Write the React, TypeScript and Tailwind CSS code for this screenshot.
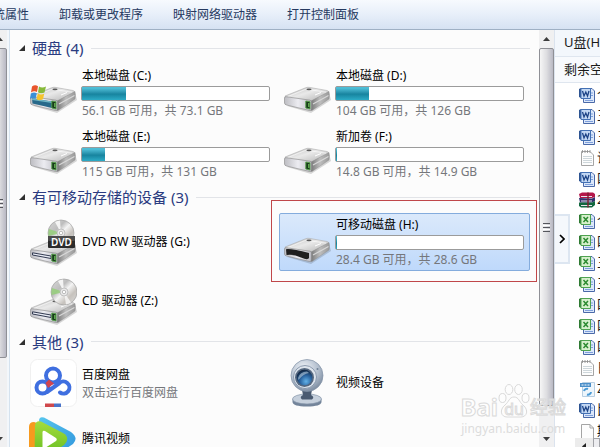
import type { ReactNode } from "react";
import clsx from "clsx";

type FileKind = "word" | "excel" | "text" | "archive" | "library" | "blank";

interface DriveInfo {
  name: string;
  detail?: string;
  used?: number;
  icon: ReactNode;
  selected?: boolean;
}

const files: { kind: FileKind; name: string }[] = [
  { kind: "word", name: "个" },
  { kind: "word", name: "五" },
  { kind: "word", name: "五" },
  { kind: "text", name: "说" },
  { kind: "word", name: "四" },
  { kind: "archive", name: "2" },
  { kind: "excel", name: "个" },
  { kind: "excel", name: "四" },
  { kind: "excel", name: "五" },
  { kind: "excel", name: "五" },
  { kind: "excel", name: "四" },
  { kind: "excel", name: "四" },
  { kind: "excel", name: "四" },
  { kind: "text", name: "日" },
  { kind: "library", name: "Z" },
  { kind: "word", name: "比" },
  { kind: "blank", name: "期" },
];

/* ---------- icons ---------- */

function Gradients() {
  return (
    <svg className="absolute h-0 w-0" aria-hidden="true">
      <defs>
        <linearGradient id="driveTop" x1="0" y1="0" x2="1" y2="1">
          <stop offset="0" stopColor="#b4b4b4" />
          <stop offset="0.45" stopColor="#e9e9e9" />
          <stop offset="1" stopColor="#b0b0b0" />
        </linearGradient>
        <linearGradient id="driveSide" x1="0" y1="0" x2="1" y2="0">
          <stop offset="0" stopColor="#747474" />
          <stop offset="0.5" stopColor="#bdbdbd" />
          <stop offset="1" stopColor="#989898" />
        </linearGradient>
        <linearGradient id="driveFront" x1="0" y1="0" x2="1" y2="0">
          <stop offset="0" stopColor="#bdbdc2" />
          <stop offset="0.5" stopColor="#ececf1" />
          <stop offset="1" stopColor="#bcbcc4" />
        </linearGradient>
        <linearGradient id="disc" x1="0" y1="0" x2="1" y2="1">
          <stop offset="0" stopColor="#d9d9d9" />
          <stop offset="0.35" stopColor="#bdbdbd" />
          <stop offset="0.5" stopColor="#f4f4f4" />
          <stop offset="0.7" stopColor="#c6c2bd" />
          <stop offset="1" stopColor="#dedede" />
        </linearGradient>
        <radialGradient id="camBody" cx="0.4" cy="0.3" r="0.75">
          <stop offset="0" stopColor="#f3f6fa" />
          <stop offset="0.6" stopColor="#b3bfce" />
          <stop offset="1" stopColor="#76869b" />
        </radialGradient>
        <radialGradient id="camLens" cx="0.6" cy="0.75" r="0.75">
          <stop offset="0" stopColor="#63b2e8" />
          <stop offset="0.5" stopColor="#2a64a0" />
          <stop offset="1" stopColor="#10243f" />
        </radialGradient>
        <linearGradient id="playGreen" x1="0" y1="0" x2="0" y2="1">
          <stop offset="0" stopColor="#a4dc3c" />
          <stop offset="1" stopColor="#5cb81f" />
        </linearGradient>
        <linearGradient id="playBlue" x1="0" y1="0" x2="1" y2="1">
          <stop offset="0" stopColor="#57c6ee" />
          <stop offset="1" stopColor="#2f93dc" />
        </linearGradient>
      </defs>
    </svg>
  );
}

function DriveBody({ y, front = "plain" }: { y: number; front?: "plain" | "system" | "slot" | "open" }) {
  return (
    <g transform={`translate(1 ${y})`}>
      <path d="M3 19 L27 26 L47 13 L46 9 Z" fill="#000" opacity="0.15" />
      <path d="M1 9 L21 1 Q23 0 25 0.3 L43 3.5 Q45 4 44.5 5.5 L27 14.5 L2 11 Z" fill="url(#driveTop)" stroke="#a3a3a3" strokeWidth="0.5" />
      <path d="M4 9.5 L22 2.2 L42 5.2" fill="none" stroke="#fff" strokeWidth="0.8" opacity="0.7" />
      <path d="M27 14 L45 4.5 Q46 8 45 12 L28 23.5 Q26.5 24 26.5 22 Z" fill="url(#driveSide)" stroke="#8c8c8c" strokeWidth="0.4" />
      <path d="M29 17 L44.5 8.5" stroke="#d8d8d8" strokeWidth="1.2" />
      <path d="M0.5 11 Q0.5 9.5 2 9.7 L26 13.2 Q27.5 13.5 27.5 15 L27.3 22 Q27 24 25.5 23.5 L2.5 18 Q0.5 17.500 0.5 16 Z" fill="url(#driveFront)" stroke="#868686" strokeWidth="0.6" />
      {front === "system" && <path d="M2 11.3 L22 14.500 V21 L2.5 16.500 Z" fill="#27698a" />}
      {front === "system" && <path d="M2 11.5 L22 14.5 V16 L2 13 Z" fill="#6fb6c4" />}
      {front === "slot" && <path d="M2.5 12.8 L21 16 V18.5 L2.5 15 Z" fill="#e9ecf5" stroke="#333b52" strokeWidth="1" />}
      {front === "open" ? (
        <path d="M2 11.2 Q8 10.5 25 15 V20 Q24 22.5 17 19.5 Q10 16 2.5 17 Z" fill="#1f1f1f" />
      ) : (
        <>
          <path d="M21.8 14 L26 14.7 V22 L21.8 21 Z" fill="#173b1b" stroke="#56a04a" strokeWidth="0.9" />
          <path d="M24.8 16 V20" stroke="#8be36e" strokeWidth="0.9" />
        </>
      )}
      <ellipse cx="25" cy="2.3" rx="2.6" ry="0.9" fill="#5a5a5a" />
      <path d="M31 8 L37 5.5" stroke="#fff" strokeWidth="1" />
    </g>
  );
}

function HardDriveIcon({ system = false }: { system?: boolean }) {
  return (
    <svg viewBox="0 0 48 48" className="h-12 w-12 shrink-0" aria-hidden="true">
      <DriveBody y={18} front={system ? "system" : "plain"} />
      {system && (
        <g>
          <path d="M3 17.5 Q6 15 9 17.2 L8 23 Q5 21.5 2 23.5 Z" fill="#e8552c" />
          <path d="M10 17.5 Q13 19.5 17 17.5 L15.5 23.5 Q12 25 9 23.2 Z" fill="#86b93a" />
          <path d="M1.8 24.5 Q5 22.5 7.8 24.2 L6.5 30 Q4 28 1 30 Z" fill="#3b8fd6" />
          <path d="M8.8 24.5 Q12 26.2 15.2 24.7 L14 30.3 Q10.5 32 7.5 30.2 Z" fill="#f5c32c" />
        </g>
      )}
    </svg>
  );
}

function RemovableDriveIcon() {
  return (
    <svg viewBox="0 0 48 48" className="h-12 w-12 shrink-0" aria-hidden="true">
      <DriveBody y={20} front="open" />
    </svg>
  );
}

function OpticalDriveIcon({ label }: { label?: string }) {
  const cx = label ? 32 : 35;
  return (
    <svg viewBox="0 0 48 48" className="h-12 w-12 shrink-0" aria-hidden="true">
      <DriveBody y={22} front="slot" />
      <g transform={`translate(${cx} 15)`}>
        <circle r="13" fill="url(#disc)" stroke="#a2a2a2" strokeWidth="0.7" />
        <path d="M0 0 L-12 -4 A13 13 0 0 0 -12.5 3 Z" fill="#8fd070" opacity="0.75" />
        <path d="M0 0 L-6 -11 A13 13 0 0 1 -1 -12.5 Z" fill="#fff" opacity="0.8" />
        <path d="M0 0 L7 10.5 A13 13 0 0 1 2 12.5 Z" fill="#fff" opacity="0.7" />
        <circle r="4" fill="#e9e9e9" stroke="#b0b0b0" strokeWidth="0.7" />
        <circle r="1.7" fill="#fff" stroke="#999" strokeWidth="0.6" />
      </g>
      {label && (
        <g>
          <rect x="19" y="18" width="27" height="12" rx="1" fill="#2b2b2b" />
          <rect x="19" y="18" width="27" height="5" rx="1" fill="#4b4b4b" />
          <text x="32.5" y="27.5" textAnchor="middle" fontSize="10" fontWeight="600" fill="#fff">
            {label}
          </text>
        </g>
      )}
    </svg>
  );
}

function NetdiskIcon() {
  return (
    <svg viewBox="0 0 48 48" className="h-12 w-12 shrink-0" aria-hidden="true">
      <rect x="1.5" y="0.5" width="46" height="47" rx="7" fill="#fff" stroke="#f0f0f0" />
      <g fill="none" strokeWidth="4" strokeLinecap="round" stroke="#3f6fe0">
        <circle cx="24" cy="16.500" r="7" />
        <circle cx="13.500" cy="28.500" r="6" />
        <path d="M18 33 L30 24.500 A6 6 0 1 1 31 33.500" />
      </g>
      <path d="M16.500 24 L20 20.500 L25 24.500 L19 29 Z" fill="#cf4450" />
      <path d="M16 44.5 H25 V48 H16 Z" fill="#d0484c" />
      <path d="M25 44.5 H32 V48 H25 Z" fill="#4a74c9" />
    </svg>
  );
}

function VideoPlayerIcon() {
  return (
    <svg viewBox="0 0 48 48" className="h-12 w-12 shrink-0" aria-hidden="true">
      <path d="M10 6 Q10 1 15 2.5 L42 17 Q50 23 44 29 L20 45 Z" fill="url(#playBlue)" />
      <path d="M0 12 Q0 7 5 7 L14 10 V46 H3 Q0 46 0 42 Z" fill="#f79a1e" />
      <path d="M6 10 Q7 5 12 6.5 L34 18 Q42 23 35 30 L12 46 Q6 48 5.5 42 Z" fill="url(#playGreen)" />
      <path d="M13.5 17 Q14 15 16 16 L27 23 Q28.5 24.5 27 26 L16 33 Q13.5 34 13.5 32 Z" fill="#fff" />
    </svg>
  );
}

function WebcamIcon() {
  return (
    <svg viewBox="0 0 48 48" className="h-12 w-12 shrink-0" aria-hidden="true">
      <path d="M9.5 40 V43 Q10 47.5 24 47.5 Q38 47.5 38.5 43 V40 Z" fill="#73849a" />
      <ellipse cx="24" cy="40" rx="14.5" ry="5" fill="#c6d0dc" stroke="#8493a7" strokeWidth="0.7" />
      <path d="M19 31 H29 L28 36 Q32 38 29 40.5 H19 Q16 38 20 36 Z" fill="#4a5a70" />
      <circle cx="24" cy="16.5" r="16" fill="url(#camBody)" stroke="#8392a6" strokeWidth="0.7" />
      <circle cx="22" cy="18" r="11.5" fill="#dde4ec" stroke="#7889a0" strokeWidth="0.8" />
      <circle cx="21.5" cy="18.5" r="9.5" fill="#54677f" />
      <circle cx="21.5" cy="18.5" r="7.8" fill="url(#camLens)" />
      <path d="M15 19 Q17 12.5 24 12.5 L26 14 Q20 15 15.5 21 Z" fill="#b8cde0" opacity="0.6" />
      <circle cx="34.5" cy="10" r="1" fill="#6f8096" />
    </svg>
  );
}

function FileIcon({ kind }: { kind: FileKind }) {
  if (kind === "archive") {
    return (
      <svg viewBox="0 0 16 16" className="h-4 w-4 shrink-0" aria-hidden="true">
        <path d="M0 2 L3 0.5 H14 L16 2 V5 L13 6 H1 Z" fill="#b5174a" />
        <path d="M0 6 L13 6.5 L16 5 V9 L13 10.5 H1 Z" fill="#33306e" />
        <path d="M0 10.5 H13 L16 9 V13 L13 15.5 H2 L0 14 Z" fill="#12683f" />
        <path d="M2 4.5 H13 M2 9 H13 M2 13.5 H13" stroke="#e9e4ee" strokeWidth="1.2" />
        <path d="M8 0.5 H10 V15.5 H8 Z" fill="#7b2030" opacity="0.7" />
      </svg>
    );
  }
  if (kind === "text" || kind === "blank") {
    return (
      <svg viewBox="0 0 16 16" className="h-4 w-4 shrink-0" aria-hidden="true">
        <path d="M2.5 1.5 H11 L14.5 5 V15.5 H2.5 Z" fill="#fdfdfd" stroke="#a5a5a5" />
        {kind === "text" ? (
          <>
            <path d="M4 6.5 H13 M4 8.5 H13 M4 10.5 H13 M4 12.5 H13" stroke="#c2cdd2" strokeWidth="0.8" />
            <path d="M3.5 0 V3 M6 0 V3 M8.5 0 V3 M11 0 V3" stroke="#8c8c8c" strokeWidth="0.8" />
          </>
        ) : (
          <path d="M11 1.5 V5 H14.5" fill="none" stroke="#a5a5a5" />
        )}
      </svg>
    );
  }
  if (kind === "library") {
    return (
      <svg viewBox="0 0 16 16" className="h-4 w-4 shrink-0" aria-hidden="true">
        <path d="M3.5 1.5 H15.5 V15.5 H3.5 Z" fill="#eef6fc" stroke="#b8cfe2" />
        <path d="M1 2 H12 V6 H1 Z" fill="#4b8fc9" />
        <path d="M2.5 4 H10.5" stroke="#fff" strokeDasharray="2 1" />
        <path d="M5 10 A3 3 0 0 1 9 8 M12 11 A3 3 0 0 1 8 13.5" fill="none" stroke="#4b9bd6" strokeWidth="2" />
      </svg>
    );
  }
  const word = kind === "word";
  return (
    <svg viewBox="0 0 16 16" className="h-4 w-4 shrink-0" aria-hidden="true">
      <path d="M4.5 1.5 H13 L15.5 4 V15.5 H4.5 Z" fill="#dce8fa" stroke="#4a69a8" />
      <path d="M12 6 H14 M12 8.5 H14 M6 13.5 H14" stroke="#7fa0dc" />
      <path d="M0 2 L2 1 V11 L0 10 Z" fill={word ? "#2d5492" : "#2f7a33"} />
      <path d="M2 1.5 H11.500 V11.500 H2 Z" fill={word ? "#c3d8f4" : "#d7f0cd"} stroke={word ? "#4471b4" : "#4fa350"} />
      {word ? (
        <path d="M3.5 4 L5 9 L6.8 5 L8.500 9 L10 4" fill="none" stroke="#1f4587" strokeWidth="1.3" />
      ) : (
        <path d="M4.500 4 L9 9 M9 4 L4.500 9" stroke="#2b8a30" strokeWidth="1.5" />
      )}
    </svg>
  );
}

/* ---------- parts ---------- */

function ScrollBar({ size }: { size: number }) {
  return (
    <div className="flex w-[15px] shrink-0 flex-col bg-[#f0f0f1]">
      <button aria-label="向上滚动" className="flex h-[18px] shrink-0 items-center justify-center">
        <svg viewBox="0 0 7 4" className="h-1 w-[7px]">
          <path d="M0 4 L3.5 0 L7 4 Z" fill="#3c3c3c" />
        </svg>
      </button>
      <div className="min-h-0 flex-1">
        <div
          className="flex flex-col items-center justify-center gap-px rounded-xs border border-[#8f9096] bg-linear-to-r from-[#f6f6f6] via-[#dedee1] to-[#b9b9c4]"
          style={{ height: `${size}%` }}
        >
          <span className="h-px w-[7px] bg-[#55565c]" />
          <span className="h-px w-[7px] bg-white" />
          <span className="h-px w-[7px] bg-[#55565c]" />
          <span className="h-px w-[7px] bg-white" />
          <span className="h-px w-[7px] bg-[#55565c]" />
        </div>
      </div>
      <button aria-label="向下滚动" className="flex h-4 shrink-0 items-center justify-center">
        <svg viewBox="0 0 7 4" className="h-1 w-[7px]">
          <path d="M0 0 L3.5 4 L7 0 Z" fill="#3c3c3c" />
        </svg>
      </button>
    </div>
  );
}

function CapacityBar({ used, name }: { used: number; name: string }) {
  return (
    <div
      role="meter"
      aria-label={name}
      aria-valuenow={used}
      className="h-[15px] rounded-xs border border-[#9b9b9b] bg-white"
    >
      <div
        className="h-full bg-linear-to-b from-[#4dbdd6] from-10% via-[#17849f] via-55% to-[#2cabc6]"
        style={{ width: `${used}%` }}
      />
    </div>
  );
}

function DriveTile({ drive, compact }: { drive: DriveInfo; compact?: boolean }) {
  return (
    <button
      className={clsx(
        "relative flex items-center gap-1 rounded-xs border px-[3px] text-left",
        compact ? "h-14" : "h-[58px]",
        drive.selected
          ? "border-[#84acdd] bg-linear-to-b from-[#dbe9fb] to-[#bfd9fb]"
          : "border-transparent"
      )}
    >
      {drive.icon}
      <div className="w-[189px]">
        <div className="truncate pl-px leading-5 text-black">{drive.name}</div>
        {drive.used !== undefined && <CapacityBar used={drive.used} name={drive.name} />}
        {drive.detail && (
          <div className={clsx("truncate pl-px text-[#75777b]", drive.used !== undefined ? "leading-5" : "leading-4")}>
            {drive.detail}
          </div>
        )}
      </div>
      {/* red marker around the highlighted drive */}
      {drive.selected && (
        <span className="pointer-events-none absolute -top-3.5 -right-2 -bottom-3 -left-[9px] border border-[#c0474a]" />
      )}
    </button>
  );
}

function DriveGroup({
  title,
  drives,
  compact,
  spacing,
}: {
  title: string;
  drives: DriveInfo[];
  compact?: boolean;
  spacing: string;
}) {
  return (
    <section>
      <div className={clsx("-ml-1.5 flex items-center pb-0.5", compact ? "h-[25px]" : "h-[30px]")}>
        <svg viewBox="0 0 6 6" className="mr-[7px] h-1.5 w-1.5">
          <path d="M6 0 V6 H0 Z" fill="#303030" />
        </svg>
        <h2 className="mr-2 text-[15px] leading-5 text-[#2a3b80]">{title}</h2>
        <span className="h-px flex-1 bg-[#e2e4e8]" />
      </div>
      <div className={clsx("grid grid-cols-[repeat(auto-fill,251px)] gap-x-[3px]", spacing)}>
        {drives.map((d) => (
          <DriveTile key={d.name} drive={d} compact={compact} />
        ))}
      </div>
    </section>
  );
}

function Watermark() {
  return (
    <div className="pointer-events-none absolute right-[34px] bottom-3 flex flex-col items-center gap-1" aria-hidden="true">
      <div className="flex items-end text-white/70 [-webkit-text-stroke:1px_#dadada]">
        <span className="text-[24px] leading-6 font-bold">Bai</span>
        <div className="relative flex h-9 w-8 items-end justify-center pb-0.5">
          <svg viewBox="0 0 32 36" className="absolute inset-0 h-9 w-8">
            <g fill="#fdfdfd" fillOpacity="0.7" stroke="#dadada">
              <ellipse cx="4.5" cy="15" rx="3.5" ry="4.5" />
              <ellipse cx="11" cy="6.5" rx="3.8" ry="5" />
              <ellipse cx="20.5" cy="6.5" rx="3.8" ry="5" />
              <ellipse cx="27.5" cy="15" rx="3.5" ry="4.5" />
              <path d="M16 14 C21 14 21 19 25 22 C31 27 29 34 23 34 H9 C3 34 1 27 7 22 C11 19 11 14 16 14 Z" />
            </g>
          </svg>
          <span className="relative text-base leading-4">du</span>
        </div>
        <span className="text-[18px] leading-6">经验</span>
      </div>
      <span className="text-xs leading-3 text-[#dcdcdc]">jingyan.baidu.com</span>
    </div>
  );
}

const hardDrives: DriveInfo[] = [
  { name: "本地磁盘 (C:)", detail: "56.1 GB 可用，共 73.1 GB", used: 23.3, icon: <HardDriveIcon system /> },
  { name: "本地磁盘 (D:)", detail: "104 GB 可用，共 126 GB", used: 17.5, icon: <HardDriveIcon /> },
  { name: "本地磁盘 (E:)", detail: "115 GB 可用，共 131 GB", used: 12.2, icon: <HardDriveIcon /> },
  { name: "新加卷 (F:)", detail: "14.8 GB 可用，共 14.9 GB", used: 0.7, icon: <HardDriveIcon /> },
];

const removable: DriveInfo[] = [
  { name: "DVD RW 驱动器 (G:)", icon: <OpticalDriveIcon label="DVD" /> },
  {
    name: "可移动磁盘 (H:)",
    detail: "28.4 GB 可用，共 28.6 GB",
    used: 0.7,
    icon: <RemovableDriveIcon />,
    selected: true,
  },
  { name: "CD 驱动器 (Z:)", icon: <OpticalDriveIcon /> },
];

const others: DriveInfo[] = [
  { name: "百度网盘", detail: "双击运行百度网盘", icon: <NetdiskIcon /> },
  { name: "视频设备", icon: <WebcamIcon /> },
  { name: "腾讯视频", icon: <VideoPlayerIcon /> },
];

export default function App() {
  return (
    <div className="relative flex h-screen flex-col overflow-hidden bg-[#fcfcfc] font-['Noto_Sans','Noto_Sans_CJK_SC',sans-serif] text-xs">
      <Gradients />

      {/* Toolbar */}
      <nav className="flex h-[30px] shrink-0 items-center border-b border-[#9fb0c4] bg-linear-to-b from-[#f7fafe] via-[#e9f0fa] via-45% to-[#d6e2f2]">
        <div className="-ml-[19px] flex gap-[30px] whitespace-nowrap text-[#26395f]">
          <button>系统属性</button>
          <button>卸载或更改程序</button>
          <button>映射网络驱动器</button>
          <button>打开控制面板</button>
        </div>
      </nav>

      <div className="flex min-h-0 flex-1">
        {/* Navigation pane edge */}
        <div className="flex w-[7px] shrink-0 justify-end overflow-hidden">
          <ScrollBar size={81} />
        </div>
        <div className="w-[3px] shrink-0 border-r border-[#d5e2ee] bg-[#f3f7fb]" />

        <main className="min-w-0 flex-1 overflow-hidden pt-1 pr-[9px] pl-[15px]">
          <DriveGroup title="硬盘 (4)" drives={hardDrives} spacing="gap-y-[3px]" />
          <DriveGroup title="有可移动存储的设备 (3)" drives={removable} spacing="gap-y-px" />
          <DriveGroup title="其他 (3)" drives={others} spacing="gap-y-0" compact />
        </main>

        <ScrollBar size={93.5} />

        {/* Removable disk panel */}
        <aside className="flex w-[46px] shrink-0 flex-col overflow-hidden border-l border-[#dbe3ee] bg-white text-[13px] whitespace-nowrap text-[#1a1a1a]">
          <div className="flex h-[27px] shrink-0 items-center border-b border-[#dfe6ef] bg-[#f3f7fc] pl-[9px]">U盘(H:)</div>
          <div className="flex h-[26px] shrink-0 items-center border-b border-[#dfe6ef] bg-[#f8fafd] pl-[9px]">剩余空间</div>
          <div className="flex min-h-0 flex-1">
            <div className="flex w-5 shrink-0 flex-col">
              <button
                aria-label="展开"
                className="mt-[131px] flex h-[50px] w-[15px] items-center justify-center border-2 border-l-0 border-[#dde6f1] bg-[#f5f8fc]"
              >
                <svg viewBox="0 0 6 10" className="h-2.5 w-1.5">
                  <path d="M1 1 L5 5 L1 9" fill="none" stroke="#000" strokeWidth="1.7" />
                </svg>
              </button>
            </div>
            <div className="flex min-w-0 flex-1 flex-col">
              <ul className="min-h-0 flex-1 overflow-hidden pt-px pl-1">
                {files.map((f, i) => (
                  <li key={i} className="flex h-[21px] items-center gap-0.5">
                    <FileIcon kind={f.kind} />
                    <span>{f.name}</span>
                  </li>
                ))}
              </ul>
              <div className="flex h-[9px] shrink-0 items-start bg-[#ececec]">
                <button aria-label="向左滚动" className="flex w-[18px] justify-center pt-[5px]">
                  <svg viewBox="0 0 4 7" className="h-[7px] w-1">
                    <path d="M4 0 L0 3.5 L4 7 Z" fill="#222" />
                  </svg>
                </button>
                <div className="h-4 flex-1 border border-[#a2a3a8] bg-[#ededf0]" />
              </div>
            </div>
          </div>
        </aside>
      </div>

      <Watermark />
    </div>
  );
}
